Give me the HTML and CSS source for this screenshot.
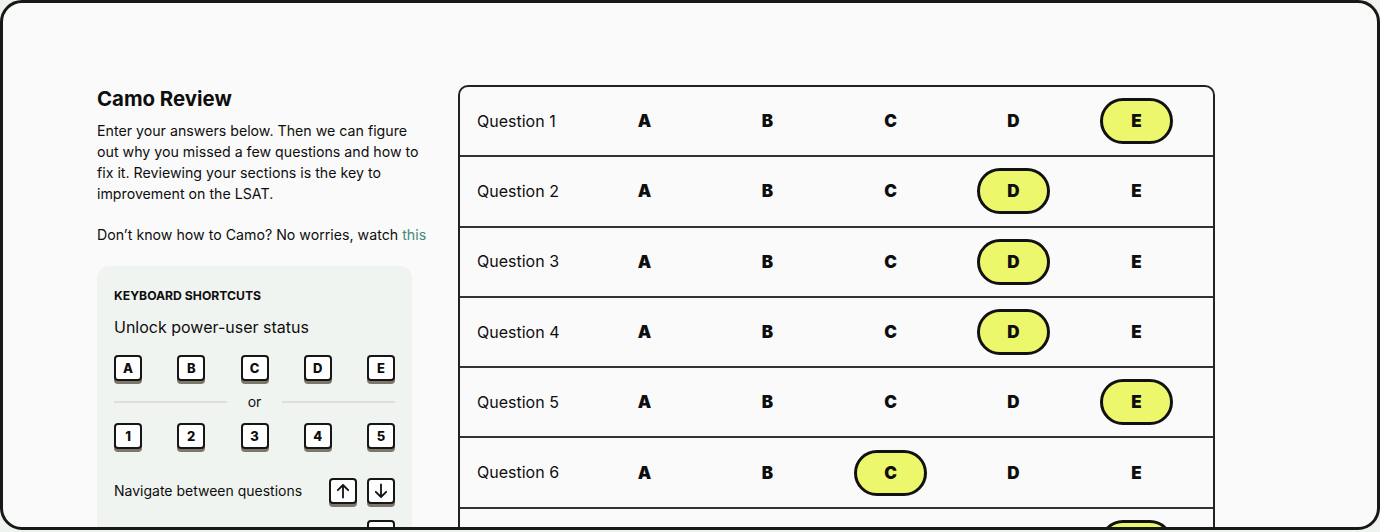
FILE: index.html
```html
<!DOCTYPE html>
<html lang="en">
<head>
<meta charset="utf-8">
<title>Camo Review</title>
<link rel="stylesheet" href="styles.css">
</head>
<body>
<div class="frame">
  <div class="layout">
    <aside class="sidebar">
      <h1 class="title">Camo Review</h1>
      <p class="intro">Enter your answers below. Then we can figure out why you missed a few questions and how to fix it. Reviewing your sections is the key to improvement on the LSAT.</p>
      <p class="watch">Don’t know how to Camo? No worries, watch <a class="link" href="#">this</a></p>
      <section class="card">
        <div class="card-label">KEYBOARD SHORTCUTS</div>
        <div class="card-title">Unlock power-user status</div>
        <div class="key-row">
          <span class="key">A</span><span class="key">B</span><span class="key">C</span><span class="key">D</span><span class="key">E</span>
        </div>
        <div class="or-row"><span class="rule"></span><span class="or">or</span><span class="rule"></span></div>
        <div class="key-row">
          <span class="key">1</span><span class="key">2</span><span class="key">3</span><span class="key">4</span><span class="key">5</span>
        </div>
        <div class="nav-row">
          <span class="nav-text">Navigate between questions</span>
          <span class="nav-keys">
            <span class="key"><svg width="14" height="16" viewBox="0 0 14 16"><path d="M7 14.5V2M1.8 7.2L7 2l5.2 5.2" fill="none" stroke="#111" stroke-width="1.8" stroke-linecap="round" stroke-linejoin="round"/></svg></span>
            <span class="key"><svg width="14" height="16" viewBox="0 0 14 16"><path d="M7 1.5V14M1.8 8.8L7 14l5.2-5.2" fill="none" stroke="#111" stroke-width="1.8" stroke-linecap="round" stroke-linejoin="round"/></svg></span>
          </span>
        </div>
        <div class="nav-row extra">
          <span class="nav-text"></span>
          <span class="nav-keys"><span class="key">&nbsp;</span></span>
        </div>
      </section>
    </aside>
    <main class="answers">
      <div class="row"><span class="q">Question 1</span><span class="opt">A</span><span class="opt">B</span><span class="opt">C</span><span class="opt">D</span><span class="opt"><span class="pill">E</span></span></div>
      <div class="row"><span class="q">Question 2</span><span class="opt">A</span><span class="opt">B</span><span class="opt">C</span><span class="opt"><span class="pill">D</span></span><span class="opt">E</span></div>
      <div class="row"><span class="q">Question 3</span><span class="opt">A</span><span class="opt">B</span><span class="opt">C</span><span class="opt"><span class="pill">D</span></span><span class="opt">E</span></div>
      <div class="row"><span class="q">Question 4</span><span class="opt">A</span><span class="opt">B</span><span class="opt">C</span><span class="opt"><span class="pill">D</span></span><span class="opt">E</span></div>
      <div class="row"><span class="q">Question 5</span><span class="opt">A</span><span class="opt">B</span><span class="opt">C</span><span class="opt">D</span><span class="opt"><span class="pill">E</span></span></div>
      <div class="row"><span class="q">Question 6</span><span class="opt">A</span><span class="opt">B</span><span class="opt"><span class="pill">C</span></span><span class="opt">D</span><span class="opt">E</span></div>
      <div class="row"><span class="q">Question 7</span><span class="opt">A</span><span class="opt">B</span><span class="opt">C</span><span class="opt">D</span><span class="opt"><span class="pill">E</span></span></div>
    </main>
  </div>
</div>
</body>
</html>
```
FILE: styles.css
```css
html {
  background: #eef3ef;
}
body {
  margin: 0;
  font-family: Inter, "Liberation Sans", sans-serif;
  color: #0e0e0e;
}
.frame {
  box-sizing: border-box;
  height: 530px;
  border: 3px solid #171915;
  border-radius: 22px;
  background: #fafafa;
  overflow: hidden;
}
.layout {
  display: flex;
  align-items: flex-start;
  gap: 29px;
  padding: 82px 0 0 94px;
}
.sidebar {
  width: 332px;
  flex: none;
}
.title {
  margin: 2px 0 0;
  font-size: 20.4px;
  line-height: 24px;
  font-weight: 700;
}
.intro {
  margin: 9px 0 0;
  font-size: 14.2px;
  line-height: 21px;
}
.watch {
  margin: 20px 0 0;
  font-size: 14.2px;
  line-height: 21px;
}
.link {
  color: #3d8a7e;
  text-decoration: none;
}
.card {
  margin-top: 21px;
  width: 315px;
  box-sizing: border-box;
  padding: 22px 17px 20px;
  background: #f0f4f0;
  border-radius: 12px;
}
.card-label {
  font-size: 12.2px;
  line-height: 16px;
  font-weight: 700;
}
.card-title {
  margin-top: 12px;
  font-size: 16px;
  line-height: 22px;
}
.key-row {
  margin-top: 17px;
  display: flex;
  justify-content: space-between;
}
.or-row + .key-row {
  margin-top: 12px;
}
.key {
  box-sizing: border-box;
  width: 28px;
  height: 26px;
  display: inline-flex;
  align-items: center;
  justify-content: center;
  border: 2px solid #161616;
  border-radius: 4px;
  background: #fff;
  box-shadow: 0 3px 0 #7d776b;
  font-size: 13px;
  font-weight: 800;
}
.or-row {
  margin-top: 12px;
  display: flex;
  align-items: center;
  gap: 21px;
  height: 18px;
}
.rule {
  flex: 1;
  height: 2px;
  background: #dedfdd;
}
.or {
  font-size: 14px;
  line-height: 18px;
}
.nav-row {
  margin-top: 29px;
  display: flex;
  align-items: center;
  justify-content: space-between;
}
.nav-row.extra {
  margin-top: 16px;
}
.nav-text {
  font-size: 14px;
  line-height: 20px;
}
.nav-keys {
  display: flex;
  gap: 10px;
}
.answers {
  width: 757px;
  flex: none;
  box-sizing: border-box;
  border: 2px solid #222;
  border-radius: 10px;
  background: #fafafa;
}
.row {
  display: grid;
  grid-template-columns: 1fr repeat(5, 123px);
  align-items: center;
  height: 68.3px;
  padding: 0 15px 0 17px;
  border-bottom: 2px solid #333;
}
.q {
  font-size: 16px;
  line-height: 20px;
  margin-top: -1px;
}
.opt {
  display: flex;
  justify-content: center;
  align-items: center;
  font-size: 17px;
  font-weight: 900;
}
.pill {
  box-sizing: border-box;
  width: 73px;
  height: 46px;
  display: inline-flex;
  align-items: center;
  justify-content: center;
  border: 3px solid #111;
  border-radius: 23px;
  background: #edf76c;
}
```
